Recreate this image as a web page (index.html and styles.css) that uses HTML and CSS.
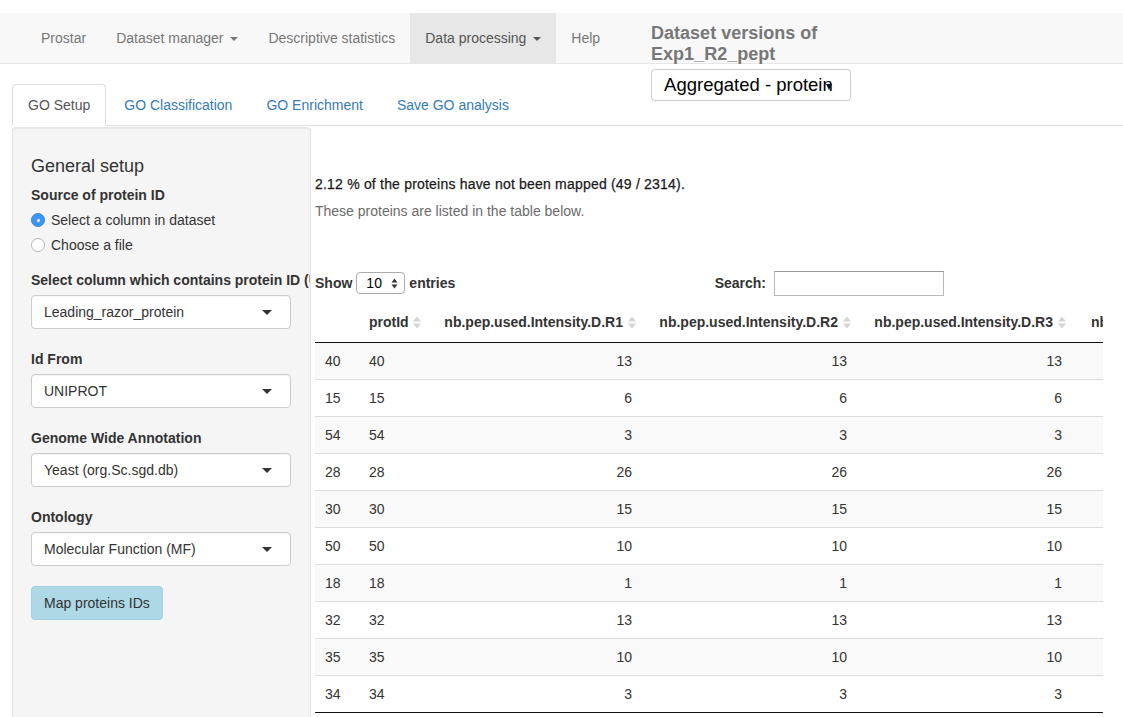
FILE: index.html
```html
<!DOCTYPE html>
<html>
<head>
<meta charset="utf-8">
<title>Prostar</title>
<link rel="stylesheet" href="styles.css">
</head>
<body>
<nav class="navbar">
  <ul class="nav">
    <li><a>Prostar</a></li>
    <li><a>Dataset manager <span class="caret"></span></a></li>
    <li><a>Descriptive statistics</a></li>
    <li class="active"><a>Data processing <span class="caret"></span></a></li>
    <li><a>Help</a></li>
  </ul>
  <div class="versions">
    <div class="versions-label">Dataset versions of Exp1_R2_pept</div>
    <div class="versions-select"><span class="vs-text">Aggregated - protein</span><span class="vs-caret"></span></div>
  </div>
</nav>

<div class="page">
  <ul class="tabs">
    <li class="active"><a>GO Setup</a></li>
    <li><a>GO Classification</a></li>
    <li><a>GO Enrichment</a></li>
    <li><a>Save GO analysis</a></li>
  </ul>

  <div class="tab-content">
    <aside class="well">
      <h3 class="well-title">General setup</h3>
      <label class="lbl">Source of protein ID</label>
      <div class="radios">
        <div class="radio"><span class="rb checked"></span>Select a column in dataset</div>
        <div class="radio"><span class="rb"></span>Choose a file</div>
      </div>
      <div class="form-group">
        <label class="lbl">Select column which contains protein ID (UniProt ID)</label>
        <div class="select">Leading_razor_protein<span class="sel-caret"></span></div>
      </div>
      <div class="form-group">
        <label class="lbl">Id From</label>
        <div class="select">UNIPROT<span class="sel-caret"></span></div>
      </div>
      <div class="form-group">
        <label class="lbl">Genome Wide Annotation</label>
        <div class="select">Yeast (org.Sc.sgd.db)<span class="sel-caret"></span></div>
      </div>
      <div class="form-group">
        <label class="lbl">Ontology</label>
        <div class="select">Molecular Function (MF)<span class="sel-caret"></span></div>
      </div>
      <button class="btn">Map proteins IDs</button>
    </aside>

    <main class="main">
      <p class="msg1">2.12 % of the proteins have not been mapped (49 / 2314).</p>
      <p class="msg2">These proteins are listed in the table below.</p>

      <div class="dt-controls">
        <div class="dt-length">Show <span class="len-select">10<svg class="updown" width="7" height="11" viewBox="0 0 7 11"><polygon points="0.5,4.5 3.5,0.5 6.5,4.5" fill="#333"/><polygon points="0.5,6.5 6.5,6.5 3.5,10.5" fill="#333"/></svg></span> entries</div>
        <div class="dt-search">Search: <span class="search-input"></span></div>
      </div>

      <div class="table-wrap">
        <table class="dt">
          <colgroup>
            <col class="c-idx"><col class="c-prot"><col class="c-r"><col class="c-r"><col class="c-r"><col class="c-r">
          </colgroup>
          <thead>
            <tr>
              <th class="t-idx"></th>
              <th class="t-left">protId<svg class="sort" width="8" height="13" viewBox="0 0 8 13"><polygon points="0,5.5 4,0.5 8,5.5" fill="#d4d4d4"/><polygon points="0,7.5 8,7.5 4,12.5" fill="#d4d4d4"/></svg></th>
              <th>nb.pep.used.Intensity.D.R1<svg class="sort" width="8" height="13" viewBox="0 0 8 13"><polygon points="0,5.5 4,0.5 8,5.5" fill="#d4d4d4"/><polygon points="0,7.5 8,7.5 4,12.5" fill="#d4d4d4"/></svg></th>
              <th>nb.pep.used.Intensity.D.R2<svg class="sort" width="8" height="13" viewBox="0 0 8 13"><polygon points="0,5.5 4,0.5 8,5.5" fill="#d4d4d4"/><polygon points="0,7.5 8,7.5 4,12.5" fill="#d4d4d4"/></svg></th>
              <th>nb.pep.used.Intensity.D.R3<svg class="sort" width="8" height="13" viewBox="0 0 8 13"><polygon points="0,5.5 4,0.5 8,5.5" fill="#d4d4d4"/><polygon points="0,7.5 8,7.5 4,12.5" fill="#d4d4d4"/></svg></th>
              <th>nb.pep.used.Intensity.L.R1<svg class="sort" width="8" height="13" viewBox="0 0 8 13"><polygon points="0,5.5 4,0.5 8,5.5" fill="#d4d4d4"/><polygon points="0,7.5 8,7.5 4,12.5" fill="#d4d4d4"/></svg></th>
            </tr>
          </thead>
          <tbody>
            <tr><td>40</td><td>40</td><td class="num">13</td><td class="num">13</td><td class="num">13</td><td class="num">13</td></tr>
            <tr><td>15</td><td>15</td><td class="num">6</td><td class="num">6</td><td class="num">6</td><td class="num">6</td></tr>
            <tr><td>54</td><td>54</td><td class="num">3</td><td class="num">3</td><td class="num">3</td><td class="num">3</td></tr>
            <tr><td>28</td><td>28</td><td class="num">26</td><td class="num">26</td><td class="num">26</td><td class="num">26</td></tr>
            <tr><td>30</td><td>30</td><td class="num">15</td><td class="num">15</td><td class="num">15</td><td class="num">15</td></tr>
            <tr><td>50</td><td>50</td><td class="num">10</td><td class="num">10</td><td class="num">10</td><td class="num">10</td></tr>
            <tr><td>18</td><td>18</td><td class="num">1</td><td class="num">1</td><td class="num">1</td><td class="num">1</td></tr>
            <tr><td>32</td><td>32</td><td class="num">13</td><td class="num">13</td><td class="num">13</td><td class="num">13</td></tr>
            <tr><td>35</td><td>35</td><td class="num">10</td><td class="num">10</td><td class="num">10</td><td class="num">10</td></tr>
            <tr><td>34</td><td>34</td><td class="num">3</td><td class="num">3</td><td class="num">3</td><td class="num">3</td></tr>
          </tbody>
        </table>
      </div>
    </main>
  </div>
</div>
</body>
</html>
```

FILE: styles.css
```css
html, body {
  margin: 0;
  height: 100%;
  overflow: hidden;
}
body {
  font-family: "Liberation Sans", Arial, Helvetica, sans-serif;
  font-size: 14px;
  line-height: 20px;
  color: #333;
  background: #fff;
}

/* ---------- navbar ---------- */
.navbar {
  margin-top: 13px;
  height: 50px;
  background: #f8f8f8;
  border-bottom: 1px solid #e7e7e7;
  display: flex;
  align-items: flex-start;
  padding-left: 26px;
}
.nav {
  list-style: none;
  margin: 0;
  padding: 0;
  display: flex;
}
.nav a {
  display: block;
  padding: 15px;
  line-height: 20px;
  color: #777;
}
.nav .active a {
  background: #e7e7e7;
  color: #555;
}
.caret {
  display: inline-block;
  width: 0;
  height: 0;
  margin-left: 3px;
  vertical-align: middle;
  border-top: 4px solid;
  border-left: 4px solid transparent;
  border-right: 4px solid transparent;
}
.versions {
  position: relative;
  z-index: 2;
  margin-left: 36px;
  padding-top: 10px;
  width: 200px;
}
.versions-label {
  font-weight: bold;
  font-size: 18px;
  line-height: 21px;
  color: #777;
}
.versions-select {
  position: relative;
  box-sizing: border-box;
  margin-top: 4px;
  height: 32px;
  border: 1px solid #ccc;
  border-radius: 4px;
  background: #fff;
  font-size: 18.5px;
  line-height: 30px;
  padding: 0 12px;
  color: #000;
  white-space: nowrap;
  overflow: hidden;
}
.vs-caret {
  position: absolute;
  left: 174px;
  top: 14px;
  width: 0;
  height: 0;
  border-top: 6px solid #111;
  border-left: 3.5px solid transparent;
  border-right: 3.5px solid transparent;
}

/* ---------- tabs ---------- */
.page {
  padding: 20px 0 0 12px;
}
.tabs {
  list-style: none;
  margin: 0;
  padding: 0;
  display: flex;
  border-bottom: 1px solid #ddd;
}
.tabs li {
  margin-bottom: -1px;
  margin-right: 2px;
}
.tabs a {
  display: block;
  padding: 10px 15px;
  line-height: 20px;
  color: #337ab7;
  border: 1px solid transparent;
  border-radius: 4px 4px 0 0;
}
.tabs .active a {
  color: #555;
  background: #fff;
  border-color: #ddd #ddd transparent;
}

/* ---------- layout ---------- */
.tab-content {
  display: flex;
  align-items: flex-start;
  gap: 4px;
}

/* ---------- sidebar ---------- */
.well {
  width: 299px;
  box-sizing: border-box;
  flex: none;
  min-height: 640px;
  margin-top: 1px;
  padding: 19px 19px 19px 18px;
  background: #f5f5f5;
  border: 1px solid #e3e3e3;
  border-radius: 4px;
  box-shadow: inset 0 1px 1px rgba(0, 0, 0, .05);
  overflow: hidden;
}
.well-title {
  margin: 9px 0 9px;
  font-size: 18px;
  font-weight: normal;
  line-height: 20px;
  color: #333;
}
.lbl {
  display: block;
  font-weight: bold;
  line-height: 20px;
  margin-bottom: 5px;
  white-space: nowrap;
}
.radios {
  display: flex;
  flex-direction: column;
  gap: 5px;
}
.radio {
  display: flex;
  align-items: center;
  height: 20px;
}
.rb {
  width: 12px;
  height: 12px;
  border: 1px solid #b5b5b5;
  border-radius: 50%;
  background: #fff;
  margin-right: 6px;
  box-sizing: content-box;
  position: relative;
}
.rb.checked {
  background: #3d95f4;
  border-color: #3286e6;
}
.rb.checked::after {
  content: "";
  position: absolute;
  left: 4.5px;
  top: 4.5px;
  width: 3px;
  height: 3px;
  border-radius: 50%;
  background: #fff;
}
.form-group {
  margin-top: 15px;
}
.form-group + .form-group {
  margin-top: 20px;
}
.select {
  position: relative;
  height: 34px;
  line-height: 32px;
  border: 1px solid #ccc;
  border-radius: 4px;
  background: #fff;
  padding: 0 12px;
  color: #333;
  width: 260px;
  box-sizing: border-box;
  box-shadow: inset 0 1px 1px rgba(0, 0, 0, .04);
}
.sel-caret {
  position: absolute;
  right: 18px;
  top: 14px;
  width: 0;
  height: 0;
  border-top: 5px solid #333;
  border-left: 5px solid transparent;
  border-right: 5px solid transparent;
}
.btn {
  margin-top: 20px;
  height: 34px;
  padding: 0 12px;
  font-family: inherit;
  font-size: 14px;
  color: #333;
  background: #add8e6;
  border: 1px solid #a3d0de;
  border-radius: 4px;
}

/* ---------- main ---------- */
.main {
  flex: 1;
  min-width: 0;
  margin-right: 20px;
  overflow: hidden;
  font-size: 14px;
}
.msg1 {
  margin: 49px 0 0;
  line-height: 18px;
  color: #1a1a1a;
  letter-spacing: 0.2px;
  -webkit-text-stroke: 0.25px #1a1a1a;
}
.msg2 {
  margin: 9px 0 0;
  line-height: 18px;
  color: #6b6b6b;
}
.dt-controls {
  margin-top: 50px;
  width: 629px;
  height: 26px;
  display: flex;
  justify-content: space-between;
  align-items: center;
  font-weight: bold;
  color: #333;
}
.dt-length {
  display: flex;
  align-items: center;
  gap: 4px;
}
.len-select {
  display: inline-flex;
  align-items: center;
  justify-content: space-between;
  width: 49px;
  height: 22px;
  box-sizing: border-box;
  padding: 0 6px 0 9px;
  border: 1px solid #aaa;
  border-radius: 4px;
  background: #fff;
  font-weight: normal;
  color: #000;
}
.dt-search {
  display: flex;
  align-items: center;
  gap: 8px;
}
.search-input {
  display: inline-block;
  width: 170px;
  height: 25px;
  box-sizing: border-box;
  border: 1px solid #b9b9b9;
  border-top-color: #999;
  background: #fff;
}
.table-wrap {
  margin-top: 6px;
  overflow: hidden;
}
.dt {
  table-layout: fixed;
  width: 972px;
  border-collapse: collapse;
  font-size: 14px;
  color: #333;
  border-bottom: 1px solid #111;
}
.c-idx { width: 44px; }
.c-prot { width: 68px; }
.c-r { width: 215px; }
.dt th {
  position: relative;
  text-align: right;
  font-weight: bold;
  padding: 10px 19px 10px 10px;
  line-height: 20px;
  white-space: nowrap;
  border-bottom: 1px solid #111;
}
.dt th.t-left {
  text-align: left;
}
.sort {
  position: absolute;
  right: 6px;
  top: 14px;
}
.dt td {
  padding: 8px 10px;
  line-height: 20px;
  border-top: 1px solid #ddd;
}
.dt tbody tr:first-child td {
  border-top: none;
}
.dt tbody tr:nth-child(odd) {
  background: #f9f9f9;
}
.dt td.num {
  text-align: right;
}
```
